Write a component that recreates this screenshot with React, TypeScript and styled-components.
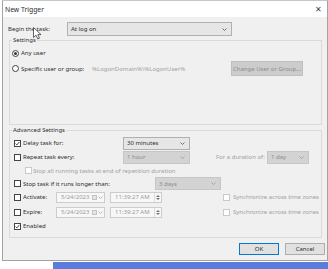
import styled, { createGlobalStyle } from 'styled-components';

const GlobalStyle = createGlobalStyle`
  html, body {
    margin: 0;
    padding: 0;
  }
  body {
    background: #fff;
    font-family: 'Noto Sans', 'Liberation Sans', sans-serif;
  }
  * {
    box-sizing: border-box;
  }
`;

const Screen = styled.div`
  position: relative;
  width: 328px;
  height: 269px;
  overflow: hidden;
  background: #fff;
  display: flex;
  flex-direction: column;
`;

const Window = styled.div`
  margin-left: 2px;
  width: 326px;
  height: 261px;
  background: #f0f0f0;
  border: 1px solid #a3a3a3;
  border-top-color: #c6c6c6;
  display: flex;
  flex-direction: column;
`;

const TitleBar = styled.div`
  height: 16px;
  background: #fff;
  display: flex;
  align-items: center;
  justify-content: space-between;
  padding: 0 5px 0 2px;
  font-size: 6.8px;
  color: #2a2a2a;
`;

const Close = styled.span`
  font-size: 8px;
  color: #444;
  line-height: 1;
`;

const Body = styled.div`
  flex: 1;
  display: flex;
  flex-direction: column;
  padding: 5px 0 0 5px;
  width: 323px;
  font-size: 6px;
  color: #2e2e2e;
`;

const Row = styled.div<{ $h: number; $mt?: number }>`
  display: flex;
  align-items: center;
  height: ${(p) => p.$h}px;
  margin-top: ${(p) => p.$mt ?? 0}px;
  white-space: nowrap;
`;

const Label = styled.span<{ $w?: number; $muted?: boolean; $ml?: number }>`
  width: ${(p) => (p.$w ? `${p.$w}px` : 'auto')};
  flex-shrink: 0;
  margin-left: ${(p) => p.$ml ?? 0}px;
  color: ${(p) => (p.$muted ? '#a0a0a0' : '#2e2e2e')};
  overflow: hidden;
`;

const Select = styled.div<{ $w: number; $h?: number; $disabled?: boolean }>`
  width: ${(p) => p.$w}px;
  height: ${(p) => p.$h ?? 13}px;
  flex-shrink: 0;
  display: flex;
  align-items: center;
  justify-content: space-between;
  padding: 0 4px 0 3px;
  background: ${(p) => (p.$disabled ? '#d3d3d3' : '#e6e6e6')};
  border: 1px solid ${(p) => (p.$disabled ? '#c6c6c6' : '#b0b0b0')};
  color: ${(p) => (p.$disabled ? '#8c8c8c' : '#2e2e2e')};
`;

const GroupBox = styled.div<{ $h: number; $mt: number }>`
  margin: ${(p) => p.$mt}px 0 0 1px;
  width: 313px;
  height: ${(p) => p.$h}px;
  border: 1px solid #dadada;
  display: flex;
  flex-direction: column;
`;

const GroupTitle = styled.span`
  margin: -5px 0 0 2px;
  padding: 0 1px;
  height: 9px;
  line-height: 9px;
  align-self: flex-start;
  background: #f0f0f0;
`;

const GroupContent = styled.div<{ $pl: number }>`
  display: flex;
  flex-direction: column;
  padding-left: ${(p) => p.$pl}px;
`;

const Radio = styled.span<{ $on?: boolean }>`
  width: 7px;
  height: 7px;
  flex-shrink: 0;
  margin-right: 2px;
  border-radius: 50%;
  border: 1px solid #444;
  background: #fff;
  display: flex;
  align-items: center;
  justify-content: center;

  &::after {
    content: '';
    width: 3px;
    height: 3px;
    border-radius: 50%;
    background: ${(p) => (p.$on ? '#333' : 'transparent')};
  }
`;

const Box = styled.span<{ $disabled?: boolean; $mr?: number }>`
  width: 7px;
  height: 7px;
  flex-shrink: 0;
  margin-right: ${(p) => p.$mr ?? 2}px;
  border: 1px solid ${(p) => (p.$disabled ? '#cacaca' : '#444')};
  background: #fff;
  display: flex;
  align-items: center;
  justify-content: center;
`;

const Button = styled.div<{ $w: number; $h: number; $disabled?: boolean; $primary?: boolean }>`
  width: ${(p) => p.$w}px;
  height: ${(p) => p.$h}px;
  flex-shrink: 0;
  display: flex;
  align-items: center;
  justify-content: center;
  background: ${(p) => (p.$disabled ? '#cccccc' : '#e1e1e1')};
  border: 1px solid ${(p) => (p.$primary ? '#0078d7' : p.$disabled ? '#bfbfbf' : '#adadad')};
  color: ${(p) => (p.$disabled ? '#8c8c8c' : '#2e2e2e')};
`;

const Field = styled.div<{ $w: number; $ml?: number }>`
  width: ${(p) => p.$w}px;
  height: 11px;
  flex-shrink: 0;
  margin-left: ${(p) => p.$ml ?? 0}px;
  display: flex;
  align-items: center;
  justify-content: space-between;
  padding: 0 1px 0 4px;
  background: #f7f7f7;
  border: 1px solid #cccccc;
  color: #9c9c9c;
`;

const FieldIcons = styled.span`
  display: flex;
  align-items: center;
  gap: 1px;
`;

const CalendarIcon = styled.span`
  width: 5px;
  height: 5px;
  border: 1px solid #c4c4c4;
  background: #e4e4e4;
`;

const Spinner = styled.span`
  display: flex;
  flex-direction: column;
  align-items: center;
  justify-content: center;
  gap: 1px;
  width: 6px;
  height: 9px;
  border-left: 1px solid #dcdcdc;
`;

const ButtonBar = styled.div`
  display: flex;
  justify-content: flex-end;
  gap: 6px;
  margin-top: 5px;
  padding-right: 1px;
`;

const Strip = styled.div`
  display: flex;
  height: 7px;
  margin-top: 1px;
`;

const StripGap = styled.div`
  width: 53px;
`;

const Taskbar = styled.div`
  flex: 1;
  background: #5a7ddc;
`;

const Pointer = styled.svg`
  position: absolute;
  left: 33px;
  top: 27px;
`;

const Chevron = ({ color = '#555' }: { color?: string }) => (
  <svg width="5" height="3" viewBox="0 0 5 3">
    <path d="M0.5 0.5 L2.5 2.5 L4.5 0.5" fill="none" stroke={color} strokeWidth="0.8" />
  </svg>
);

const Tick = () => (
  <svg width="5" height="5" viewBox="0 0 5 5">
    <path d="M0.6 2.6 L1.9 3.9 L4.4 0.9" fill="none" stroke="#333" strokeWidth="0.9" />
  </svg>
);

const Arrow = ({ up }: { up?: boolean }) => (
  <svg width="4" height="2" viewBox="0 0 4 2">
    <path d={up ? 'M0 2 L2 0 L4 2 Z' : 'M0 0 L2 2 L4 0 Z'} fill="#777" />
  </svg>
);

const DateTimeRow = ({ label, mt }: { label: string; mt?: number }) => (
  <Row $h={14} $mt={mt}>
    <Box />
    <Label $w={33}>{label}</Label>
    <Field $w={49}>
      <span>5/24/2023</span>
      <FieldIcons>
        <CalendarIcon />
        <Chevron color="#aaa" />
      </FieldIcons>
    </Field>
    <Field $w={52} $ml={5}>
      <span>11:39:27 AM</span>
      <Spinner>
        <Arrow up />
        <Arrow />
      </Spinner>
    </Field>
    <Box $disabled $mr={3} style={{ marginLeft: 61 }} />
    <Label $muted>Synchronize across time zones</Label>
  </Row>
);

export default function App() {
  return (
    <>
      <GlobalStyle />
      <Screen>
        <Window>
          <TitleBar>
            <span>New Trigger</span>
            <Close>✕</Close>
          </TitleBar>
          <Body>
            <Row $h={14}>
              <Label $w={59}>Begin the task:</Label>
              <Select $w={165} $h={14}>
                <span>At log on</span>
                <Chevron />
              </Select>
            </Row>

            <GroupBox $h={85} $mt={4}>
              <GroupTitle>Settings</GroupTitle>
              <GroupContent $pl={2}>
                <Row $h={12} $mt={2}>
                  <Radio $on />
                  <Label>Any user</Label>
                </Row>
                <Row $h={15} $mt={2}>
                  <Radio />
                  <Label $w={71}>Specific user or group:</Label>
                  <Label $w={139} $muted>%LogonDomain%\%LogonUser%</Label>
                  <Button $w={72} $h={15} $disabled>
                    Change User or Group...
                  </Button>
                </Row>
              </GroupContent>
            </GroupBox>

            <GroupBox $h={108} $mt={5}>
              <GroupTitle>Advanced Settings</GroupTitle>
              <GroupContent $pl={4}>
                <Row $h={14} $mt={1}>
                  <Box>
                    <Tick />
                  </Box>
                  <Label $w={100}>Delay task for:</Label>
                  <Select $w={67}>
                    <span>30 minutes</span>
                    <Chevron />
                  </Select>
                </Row>
                <Row $h={14}>
                  <Box />
                  <Label $w={100}>Repeat task every:</Label>
                  <Select $w={67} $disabled>
                    <span>1 hour</span>
                    <Chevron color="#999" />
                  </Select>
                  <Label $w={51} $ml={26} $muted>
                    For a duration of:
                  </Label>
                  <Select $w={42} $disabled>
                    <span>1 day</span>
                    <Chevron color="#999" />
                  </Select>
                </Row>
                <Row $h={13}>
                  <Box $disabled style={{ marginLeft: 11, marginRight: 1 }} />
                  <Label $muted>Stop all running tasks at end of repetition duration</Label>
                </Row>
                <Row $h={13}>
                  <Box />
                  <Label $w={132}>Stop task if it runs longer than:</Label>
                  <Select $w={66} $disabled>
                    <span>3 days</span>
                    <Chevron color="#999" />
                  </Select>
                </Row>
                <DateTimeRow label="Activate:" />
                <DateTimeRow label="Expire:" mt={1} />
                <Row $h={14}>
                  <Box>
                    <Tick />
                  </Box>
                  <Label>Enabled</Label>
                </Row>
              </GroupContent>
            </GroupBox>

            <ButtonBar>
              <Button $w={40} $h={12} $primary>
                OK
              </Button>
              <Button $w={40} $h={12}>
                Cancel
              </Button>
            </ButtonBar>
          </Body>
        </Window>
        <Strip>
          <StripGap />
          <Taskbar />
        </Strip>
        <Pointer width="10" height="13" viewBox="0 0 10 13">
          <path
            d="M0.5 0.5 L0.5 10.5 L3 8.2 L4.8 12 L6.5 11.2 L4.8 7.6 L8 7.6 Z"
            fill="#fff"
            stroke="#222"
            strokeWidth="0.7"
            strokeLinejoin="round"
          />
        </Pointer>
      </Screen>
    </>
  );
}
